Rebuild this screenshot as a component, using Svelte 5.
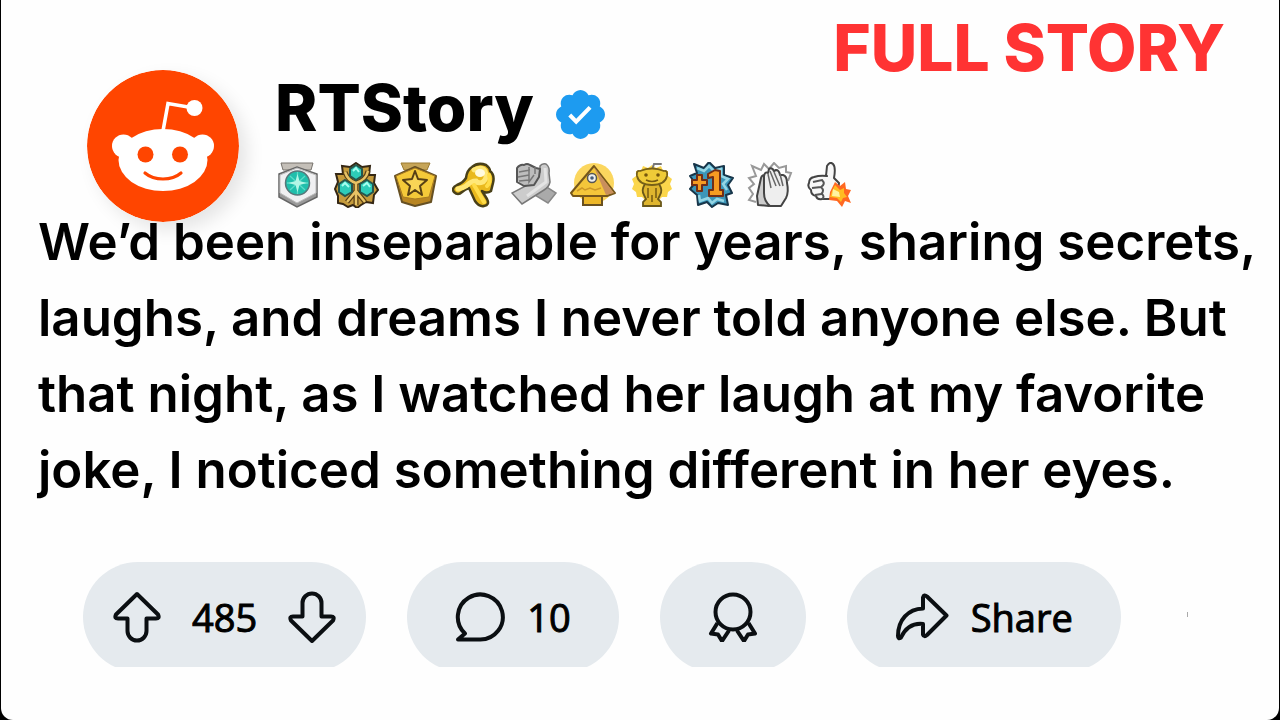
<script lang="ts">
	const lines: string[] = [
		"We’d been inseparable for years, sharing secrets,",
		"laughs, and dreams I never told anyone else. But",
		"that night, as I watched her laugh at my favorite",
		"joke, I noticed something different in her eyes."
	];

	let votes = 485;
	let comments = 10;
</script>

<main class="card">
	<p class="banner">FULL STORY</p>

	<header class="profile">
		<svg class="avatar" viewBox="0 0 152 152" role="img" aria-label="RTStory avatar">
			<circle cx="76" cy="76" r="76" fill="#ff4500" />
			<path d="M76 61 81 33.5 107 38" fill="none" stroke="#fff" stroke-width="3.6" />
			<circle cx="107.5" cy="38" r="8" fill="#fff" />
			<circle cx="36.5" cy="76" r="11.5" fill="#fff" />
			<circle cx="115.5" cy="76" r="11.5" fill="#fff" />
			<ellipse cx="76" cy="90" rx="44.5" ry="31" fill="#fff" />
			<circle cx="58.5" cy="84.5" r="8" fill="#ff4500" />
			<circle cx="93" cy="84.5" r="8" fill="#ff4500" />
			<path d="M58 103Q65 109 76 109T94 103" fill="none" stroke="#ff4500" stroke-width="3.2" stroke-linecap="round" />
		</svg>

		<div class="identity">
			<div class="name-row">
				<h1>RTStory</h1>
				<svg class="verified" viewBox="1.75 1.75 20.5 20.5" role="img" aria-label="Verified">
					<path fill="#1d9bf0" d="M22.25 12c0-1.43-.88-2.67-2.19-3.34.46-1.39.2-2.9-.81-3.91s-2.52-1.27-3.91-.81c-.66-1.31-1.91-2.19-3.34-2.19s-2.67.88-3.33 2.19c-1.4-.46-2.91-.2-3.92.81s-1.26 2.52-.8 3.91c-1.31.67-2.2 1.91-2.2 3.34s.89 2.67 2.2 3.34c-.46 1.39-.21 2.9.8 3.91s2.52 1.26 3.91.81c.67 1.31 1.91 2.19 3.34 2.19s2.68-.88 3.34-2.19c1.39.45 2.9.2 3.91-.81s1.27-2.52.81-3.91c1.31-.67 2.19-1.91 2.19-3.34z" />
					<path d="M7.500 12.200 10.200 15 16 9" fill="none" stroke="#fff" stroke-width="1.700" />
				</svg>
			</div>

			<div class="awards">
				<!-- Silver hexagon with teal gem -->
				<svg viewBox="0 0 46 46" aria-hidden="true">
					<path d="M6 1h32l-2 7H8z" fill="#c4bfb8" stroke="#77736d" />
					<path d="m4 12 18-7 20 7v23l-20 10L4 35z" fill="#999" stroke="#666" stroke-width="1.500" />
					<path d="m5 13 17-7 19 7v18l-19 10L5 31z" fill="#f0f0f2" stroke="#bbb" />
					<circle cx="22.500" cy="21" r="12" fill="#20bfac" stroke="#58777a" stroke-width="1.500" />
					<path d="M22.500 10v22M12 21h21M15 14l15 14m0-14L15 28" stroke="#5cdcc8" stroke-width="1.300" />
					<path d="m22.500 12 2 7 7 2-7 2-2 7-2-7-7-2 7-2z" fill="#b4f6e6" />
				</svg>
				<!-- Gold trinity with three gems -->
				<svg viewBox="0 0 46 46" aria-hidden="true">
					<path d="m22 1 6 4 8-1-1 9 6 0-1 8 4 7-4 5-1 8-7-1-5 3-4 3-4-3-5 2-5-3-5-1v-7l-3-7 3-7-2-8 7 0-1-8 8 1z" fill="#c59b3c" stroke="#352714" stroke-width="2" />
					<path d="M11 10q3 9 11 11Q32 18 34 9M22 20v23M13 40l9-11 9 11" fill="none" stroke="#5a3f14" stroke-width="5" />
					<path d="M11 10q3 9 11 11Q32 18 34 9M22 20v23M13 40l9-11 9 11" fill="none" stroke="#e7c365" stroke-width="2.500" />
					<g fill="#2dccb9" stroke="#27564e" stroke-width="2">
						<path d="m22 3 6 4v7l-6 4-6-4V7z" />
						<path d="m11 18 7 4v8l-7 4-6-4v-8z" />
						<path d="m33 18 6 4v8l-6 4-7-4v-8z" />
					</g>
					<path d="m19 9 3-3 3 4M8 24l3-3 4 4m14-1 4-3 3 4" fill="none" stroke="#a5fff0" stroke-width="2" />
				</svg>
				<!-- Gold pentagon with star -->
				<svg viewBox="0 0 46 46" aria-hidden="true">
					<path d="M8 1h29l-3 7H11z" fill="#c6a558" stroke="#9b7b30" />
					<path d="m2 14 20-9 21 9-5 26-16 4-13-4z" fill="#b88522" stroke="#665023" stroke-width="2" stroke-linejoin="round" />
					<path d="m3 14 19-8 20 8-6 21-14 2-12-2z" fill="#f4c939" stroke="#a77b22" />
					<path d="m22 9 3 8 9 1-7 6 2 9-7-5-7 5 2-9-7-6 9-1z" fill="#f8d556" stroke="#574015" stroke-width="2" stroke-linejoin="round" />
				</svg>
				<!-- Pointing hand -->
				<svg viewBox="0 0 46 46" aria-hidden="true">
					<path d="M20 5q6-5 14-2 4 3 4 6 5 4 3 12l-2 8q-4 3-9 0l5 8q3 6-3 7-5 1-9-5l-6-13q-4 1-7 4-4 4-8 0-3-4 3-7 6-2 9-7 1-8 6-11z" fill="#e9b91d" stroke="#494018" stroke-width="2.500" stroke-linejoin="round" />
					<path d="M22 8q8-4 11 1 3 7-2 11-5 2-7-1-5 0-10 5-3 2-8 3" fill="none" stroke="#ffe878" stroke-width="5" stroke-linecap="round" />
					<path d="m22 23 10 17M37 13q2 8-2 11" fill="none" stroke="#ffdd49" stroke-width="4" stroke-linecap="round" />
					<ellipse cx="28" cy="11" rx="5" ry="4" fill="#fffbe0" />
				</svg>
				<!-- Clasped hands -->
				<svg viewBox="0 0 46 46" aria-hidden="true">
					<path d="M11 21 25 18 45 31 37 41 22 32z" fill="#aaa" stroke="#888" stroke-width="1.500" />
					<path d="M24 19 29 10V4q2-3 6-2 4 3 3 9l1 9q-1 5-6 8L11 42 1 31z" fill="#ccc" stroke="#777" stroke-width="1.500" />
					<path d="M6 6q3-4 7-3 3-2 6 0l6 3 4 1-1 8-5 8-10 1-7-4z" fill="#bdbdbd" stroke="#555" stroke-width="2" stroke-linejoin="round" />
					<path d="m8 10 11-2M7 15l11-2M8 19l10-1M18 5v15l5-7M24 5v7" fill="none" stroke="#777" stroke-width="1.500" />
					<path d="m34 6 1 14-19 14" fill="none" stroke="#e4e4e4" stroke-width="3" />
				</svg>
				<!-- Pyramid -->
				<svg viewBox="0 0 46 46" aria-hidden="true">
					<circle cx="24" cy="21" r="20" fill="#fbd65e" />
					<path d="M13 33h19v10H13z" fill="#edb728" stroke="#695020" stroke-width="2" />
					<path d="M24 4 45 31 37 34H3L1 31Z" fill="#f4c63a" stroke="#76571b" stroke-width="2" stroke-linejoin="round" />
					<path d="M24 5 44 31 36 33Z" fill="#c98f5c" />
					<path d="m7 29 5-3 3 2 5-2 5 2 6-2" fill="none" stroke="#ce9828" stroke-width="1.500" />
					<circle cx="22" cy="16" r="4.500" fill="#eee" stroke="#555" stroke-width="1.500" />
					<circle cx="22" cy="16" r="1.800" fill="#475b78" />
				</svg>
				<!-- Golden mascot -->
				<svg viewBox="0 0 46 46" aria-hidden="true">
					<path d="M23 3 27 6 32 4 34 9 39 9 39 14 43 17 41 22 43 27 39 30 38 35 33 35 29 39 23 37 17 39 13 35 8 35 7 30 3 27 5 22 3 17 7 14 7 9 12 9 14 4 19 6Z" fill="#fbd64b" />
					<path d="m23 8 2-6 7 0" fill="none" stroke="#777" stroke-width="2" stroke-linecap="round" />
					<path d="M16 22q-4 6-1 11l2 4-3 3v4h18v-4l-3-3 2-4q3-5-1-11z" fill="#dfb52e" stroke="#695719" stroke-width="1.800" />
					<path d="M11 9q12-5 24 0 4-1 3 5-2 9-15 9T8 14q-1-6 3-5z" fill="#efcb38" stroke="#776018" stroke-width="1.800" />
					<circle cx="17" cy="13" r="1.800" fill="#75570d" />
					<circle cx="29" cy="13" r="1.800" fill="#75570d" />
					<path d="M17 18q6 3 12 0M19 26v10m8-10v10m-4-3v7" fill="none" stroke="#765a12" stroke-width="1.500" />
				</svg>
				<!-- Plus one burst -->
				<svg viewBox="0 0 46 46" aria-hidden="true">
					<path d="m6 2 10 4 5-6 6 6 9-2 0 9 9 3-5 7 4 8-6 2 2 10-10-2-6 4-5-5-9 3-1-10-7-6 5-6-5-7 7-3z" fill="#3c96b9" stroke="#18364a" stroke-width="2" stroke-linejoin="round" />
					<path d="m9 6 7 3 5-5 5 5 7-2 0 7 7 3-5 5 4 6M11 33l1 6 8-3 4 5 5-4 7 2" fill="none" stroke="#94d5e4" stroke-width="2.500" />
					<g fill="#f69c22" stroke="#712e17" stroke-width="2" stroke-linejoin="round">
						<path d="M9 13h5v5h5v5h-5v6H9v-6H4v-5h5z" />
						<path d="m20 12 7-4 5 1v19h3v6H21v-6h4V15l-5 1z" />
					</g>
				</svg>
				<!-- Applause -->
				<svg viewBox="0 0 46 46" aria-hidden="true">
					<path d="m9 40-7-2 4-6-4-6 5-4-5-6 7-2-4-10 9 4 3-6 5 5 5-6 5 5 7-2 0 6 5 1-3 8" fill="none" stroke="#999" stroke-width="2" />
					<path d="M11 43 10 34 14 16q1-4 5-2l5 12-2 18z" fill="#ccc" stroke="#444" stroke-width="2" stroke-linejoin="round" />
					<path d="M17 31 17 14q1-5 4-3l1-4q3-2 5 2l2-1q3 0 4 5l3 0q4 1 4 8 2 9-1 15l-5 8H23q-6-5-6-13z" fill="#eee" stroke="#444" stroke-width="2" stroke-linejoin="round" />
					<path d="m21 12 3 14m-1-17 6 15m-2-14 6 14m0-12 3 12" fill="none" stroke="#666" stroke-width="1.500" />
				</svg>
				<!-- Thumbs up with flame -->
				<svg viewBox="0 0 46 46" aria-hidden="true">
					<path d="M20 14 21 4q3-5 6-2 3 3 1 14l5 5-2 14-8 2-7 0q-5 1-6-3-5-1-5-6-4-3-2-7 0-5 5-6 6-2 13-1z" fill="#f7f7f7" stroke="#444" stroke-width="2" stroke-linejoin="round" />
					<path d="m7 20 9-2q4 4-1 7l-9 1m9-1q4 4 0 7l-6 1m7-1q3 3 0 5" fill="none" stroke="#555" stroke-width="2" />
					<path d="M29 20 34 24 39 20 40 27 45 28 42 34 45 41 39 39 36 45 31 39 23 38 24 30Z" fill="#ff6821" />
					<path d="M29 23 34 28 38 26 38 31 41 35 37 36 35 40 31 36 24 35 26 29Z" fill="#ffbc21" />
					<path d="m27 27 6 3 1 5-8-1z" fill="#fff4a0" />
				</svg>
			</div>
		</div>
	</header>

	<p class="story">
		{#each lines as line}
			<span class="line">{line}</span>
		{/each}
	</p>

	<footer class="actions">
		<div class="pill votes">
			<button aria-label="Upvote">
				<svg class="arrow" viewBox="0 0 48 52" aria-hidden="true">
					<path d="M24 3 3 23.5Q1 27.5 5 27.5H14.5V40a9.5 9.5 0 0 0 19 0V27.5H43Q47 27.5 45 23.5Z" />
				</svg>
			</button>
			<span>{votes}</span>
			<button aria-label="Downvote">
				<svg class="arrow" viewBox="0 0 48 52" aria-hidden="true">
					<path d="M24 50 3 29.5Q1 25.5 5 25.5H14.5V12a9.5 9.5 0 0 1 19 0V25.5H43Q47 25.5 45 29.5Z" />
				</svg>
			</button>
		</div>
		<button class="pill" aria-label="{comments} comments">
			<svg class="icon" viewBox="0 0 50 50" aria-hidden="true">
				<path d="M25 47.5H3L10 41.5A22.5 22.5 0 1 1 25 47.5Z" />
			</svg>
			<span>{comments}</span>
		</button>
		<button class="pill" aria-label="Give award">
			<svg class="icon" viewBox="0 0 50 50" aria-hidden="true">
				<circle cx="25" cy="20" r="17.5" />
				<path d="M9.5 31 3 41.5 10 42.5 14 49 21 38.5M40.5 31 47 41.5 40 42.5 36 49 29 38.5" />
			</svg>
		</button>
		<button class="pill">
			<svg class="share" viewBox="0 0 54 48" aria-hidden="true">
				<path d="M28 4.5Q29 1 32 3.5L51.5 22.5 32 42Q29 44.5 28 41.5V31C18 30 11 34 6 44.5Q3 46.5 3 43C3 27 13 16 28 15.5Z" />
			</svg>
			<span>Share</span>
		</button>
		<i class="tick"></i>
	</footer>
</main>

<style>
	:global(body) {
		background: #000;
	}

	.card {
		box-sizing: border-box;
		min-height: 100vh;
		margin: 0 1px;
		background: #fefefe;
		border-radius: 0 0 12px 12px;
		color: #000;
		font-family: Inter, "Open Sans", sans-serif;
		overflow: hidden;
	}

	.banner {
		margin: 0;
		padding: 12px 54px 0 0;
		height: 58px;
		line-height: 72px;
		font-size: 64px;
		font-weight: 800;
		text-align: right;
		color: #ff3333;
	}

	.profile {
		display: flex;
		gap: 36px;
		padding-left: 86px;
	}

	.avatar {
		flex: none;
		width: 152px;
		height: 152px;
		border-radius: 50%;
		box-shadow: 8px 8px 18px rgba(0, 0, 0, 0.1);
	}

	.name-row {
		display: flex;
		align-items: flex-start;
		gap: 22px;
		height: 92px;
	}

	h1 {
		margin: 0;
		line-height: 76px;
		font-size: 64px;
		font-weight: 800;
	}

	.verified {
		width: 49px;
		height: 49px;
		margin-top: 20px;
	}

	.awards {
		display: flex;
		gap: 13px;
	}

	.awards svg {
		width: 46px;
		height: 46px;
	}

	.story {
		position: relative;
		margin: -18px 0 0;
		padding-left: 37px;
		font-size: 51px;
		font-weight: 600;
		line-height: 76px;
		white-space: nowrap;
	}

	.line {
		display: block;
	}

	/* The strip cuts off the lowest edge of the pills */
	.actions {
		display: flex;
		gap: 41px;
		height: 105px;
		margin-top: 54px;
		padding-left: 82px;
		overflow: hidden;
	}

	button {
		margin: 0;
		padding: 0;
		border: 0;
		background: none;
		color: inherit;
		font: inherit;
		cursor: pointer;
	}

	.pill {
		display: flex;
		flex: none;
		align-items: center;
		box-sizing: border-box;
		gap: 22px;
		height: 110px;
		padding: 0 48px;
		border-radius: 55px;
		background: #e5eaee;
		font-family: "Open Sans", "Noto Sans", sans-serif;
		font-size: 38px;
		-webkit-text-stroke: 1px currentColor;
	}

	.votes {
		gap: 31px;
		padding: 0 30px;
	}

	.pill svg {
		display: block;
		fill: none;
		stroke: #0b0f12;
		stroke-width: 4;
		stroke-linejoin: round;
	}

	.arrow {
		width: 48px;
		height: 52px;
	}

	.icon {
		width: 50px;
		height: 50px;
	}

	.share {
		width: 54px;
		height: 48px;
	}

	.tick {
		align-self: center;
		width: 1px;
		height: 5px;
		margin-left: 25px;
		background: #aaa;
	}
</style>
